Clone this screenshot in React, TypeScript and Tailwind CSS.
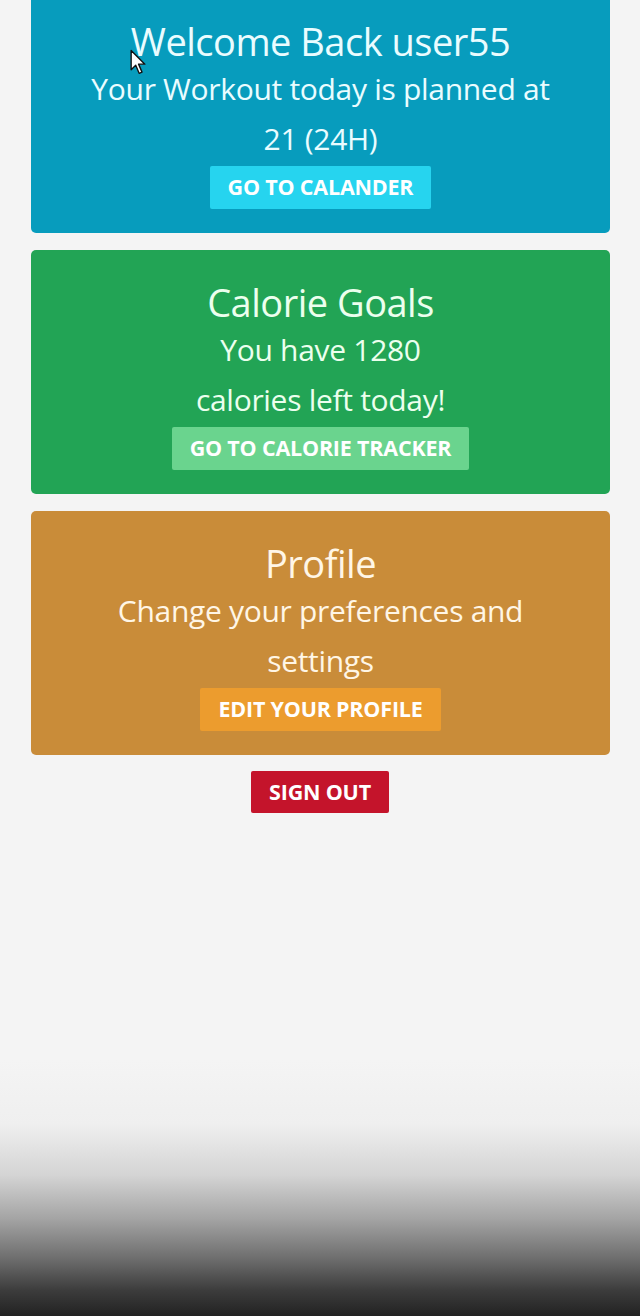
import React from 'react'

const font = { fontFamily: '"Open Sans", "Noto Sans", sans-serif' }

function Card({
  title,
  lines,
  button,
  cardClass,
  buttonClass,
  textClass,
}: {
  title: string
  lines: string[]
  button: string
  cardClass: string
  buttonClass: string
  textClass: string
}) {
  return (
    <div className={`rounded-[5px] pt-[30px] pb-[24px] px-4 flex flex-col items-center text-center ${cardClass}`}>
      <h2 className={`text-[38px] leading-[45px] tracking-[-0.5px] ${textClass}`}>{title}</h2>
      {lines.map((l) => (
        <p key={l} className={`text-[30px] leading-[50px] tracking-[-0.3px] ${textClass}`}>
          {l}
        </p>
      ))}
      <button className={`mt-[2px] h-[43px] px-[18px] rounded-[2px] text-[21.5px] font-bold uppercase tracking-[-0.2px] text-white ${buttonClass}`}>
        {button}
      </button>
    </div>
  )
}

export default function App() {
  return (
    <div className="relative min-h-[1316px] flex flex-col bg-[#f4f4f4]" style={font}>
      <div className="flex flex-col gap-[17px] px-[31px] -mt-[11px] w-[641px]">
        <Card
          title="Welcome Back user55"
          lines={['Your Workout today is planned at', '21 (24H)']}
          button="Go to Calander"
          cardClass="bg-[#079cbd]"
          textClass="text-[#eafcff]"
          buttonClass="bg-[#26d4ef]"
        />
        <Card
          title="Calorie Goals"
          lines={['You have 1280', 'calories left today!']}
          button="Go to Calorie Tracker"
          cardClass="bg-[#22a455]"
          textClass="text-[#ecffee]"
          buttonClass="bg-[#6ad48e]"
        />
        <Card
          title="Profile"
          lines={['Change your preferences and', 'settings']}
          button="Edit your profile"
          cardClass="bg-[#c98c39]"
          textClass="text-[#fff6e6]"
          buttonClass="bg-[#ec9c2e]"
        />
      </div>
      <div className="flex justify-center mt-[16px]">
        <button className="h-[42px] px-[18px] rounded-[2px] bg-[#c4142b] text-white text-[21.5px] font-bold uppercase tracking-[-0.2px]">
          Sign out
        </button>
      </div>
      <div className="flex-1" />
      <div className="h-[256px] bg-[linear-gradient(to_bottom,#f4f4f4_0%,#efefef_25%,#d4d4d4_45%,#a4a4a4_62%,#6c6c6c_78%,#3c3c3c_90%,#222222_100%)]" />
      <svg className="absolute left-[130px] top-[49px]" width="16" height="28" viewBox="0 0 14 24">
        <path d="M1 1 L1 18 L5 14 L8 21 L10.5 20 L7.5 13 L13 13 Z" fill="#fff" stroke="#111" strokeWidth="1.2" strokeLinejoin="round" />
      </svg>
    </div>
  )
}
